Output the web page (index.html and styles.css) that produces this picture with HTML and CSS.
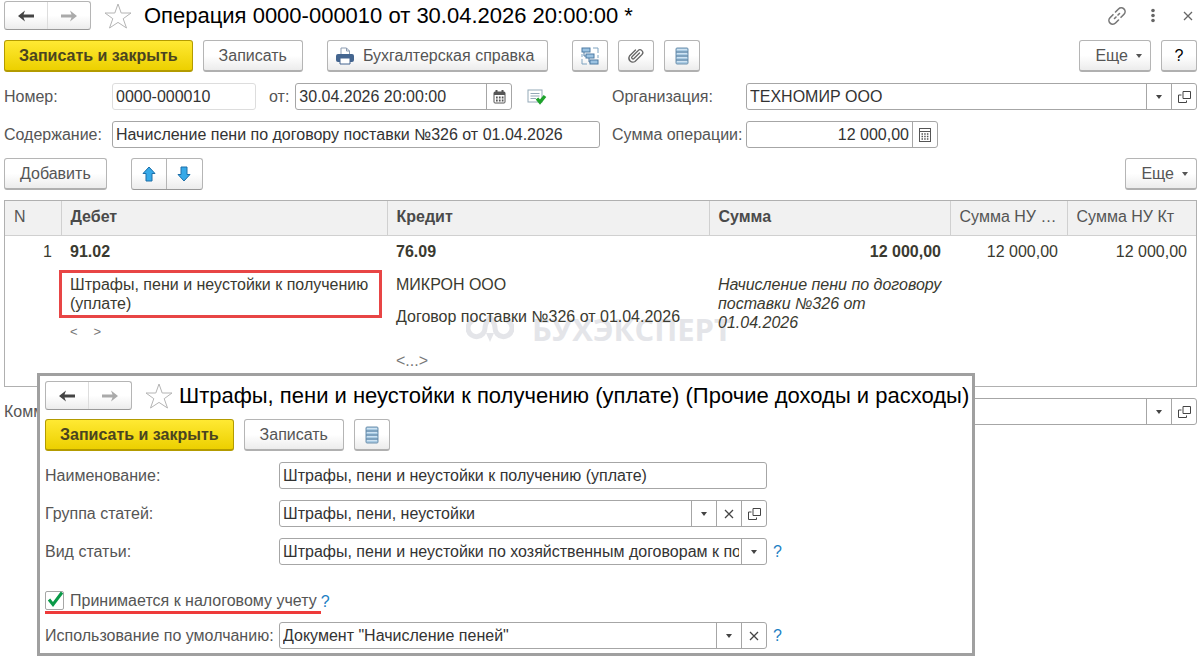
FILE: index.html
```html
<!DOCTYPE html>
<html lang="ru">
<head>
    <meta charset="UTF-8">
    <meta name="viewport" content="width=device-width, initial-scale=1.0">
    <title>Операция 0000-000010</title>
    <link rel="stylesheet" href="styles.css">
</head>
<body>
    <!-- Общие иконки -->
    <svg class="sprite" aria-hidden="true">
        <symbol id="i-back" viewBox="0 0 18 14">
            <path d="M1 7 L8 1.5 L6.5 5.5 H17 V8.5 H6.5 L8 12.5 Z" fill="currentColor"/>
        </symbol>
        <symbol id="i-forward" viewBox="0 0 18 14">
            <path d="M17 7 L10 1.5 L11.5 5.5 H1 V8.5 H11.5 L10 12.5 Z" fill="currentColor"/>
        </symbol>
        <symbol id="i-star" viewBox="0 0 28 26">
            <path d="M14 1 L17.2 10 H27 L19.2 15.7 L22.5 25 L14 19.4 L5.5 25 L8.8 15.7 L1 10 H10.8 Z" fill="#fff" stroke="#b4b4b4"/>
        </symbol>
        <symbol id="i-list" viewBox="0 0 14 18">
            <rect x="1" y="1" width="12" height="16" rx="1" fill="#a9cbe4" stroke="#6f91ad"/>
            <path d="M1 5 H13 M1 9 H13 M1 13 H13" stroke="#557a9b"/>
            <path d="M2 2.5 H12 M2 6.5 H12 M2 10.5 H12 M2 14.5 H12" stroke="#cfe3f2"/>
        </symbol>
        <symbol id="i-down" viewBox="0 0 6 4">
            <path d="M0 0 H6 L3 4 Z" fill="currentColor"/>
        </symbol>
        <symbol id="i-open" viewBox="0 0 13 13">
            <path d="M5 1.5 H12.5 V8.5 H5 Z M3.5 5 H0.5 V12.5 H8.5 V10.5" fill="none" stroke="currentColor"/>
        </symbol>
        <symbol id="i-cross" viewBox="0 0 10 10">
            <path d="M1 1 L9 9 M9 1 L1 9" fill="none" stroke="currentColor" stroke-width="1.3"/>
        </symbol>
    </svg>

    <main class="window">
        <header class="titlebar">
            <div class="nav">
                <button type="button" aria-label="Назад"><svg width="18" height="14"><use href="#i-back"/></svg></button>
                <button type="button" class="dim" aria-label="Вперед"><svg width="18" height="14"><use href="#i-forward"/></svg></button>
            </div>
            <button type="button" class="icon-btn" aria-label="В избранное"><svg width="28" height="26"><use href="#i-star"/></svg></button>
            <h1 class="title">Операция 0000-000010 от 30.04.2026 20:00:00 *</h1>
            <div class="window-tools">
                <button type="button" class="icon-btn" aria-label="Ссылка">
                    <svg width="20" height="20" viewBox="0 0 20 20" fill="none" stroke="#777" stroke-width="1.6" stroke-linecap="round">
                        <path d="M8.5 6 L11.5 3 A3.8 3.8 0 0 1 17 8.3 L14 11.3"/>
                        <path d="M11.5 14 L8.5 17 A3.8 3.8 0 0 1 3 11.7 L6 8.7"/>
                        <path d="M7.5 12.5 L9 11 M11 9 L12.5 7.5"/>
                    </svg>
                </button>
                <button type="button" class="icon-btn" aria-label="Меню">
                    <svg width="6" height="16" viewBox="0 0 6 16" fill="#666"><circle cx="3" cy="2.5" r="1.8"/><circle cx="3" cy="7.5" r="1.8"/><circle cx="3" cy="12.5" r="1.8"/></svg>
                </button>
                <button type="button" class="icon-btn icon-close" aria-label="Закрыть"><svg width="10" height="10"><use href="#i-cross"/></svg></button>
            </div>
        </header>

        <div class="toolbar">
            <button type="button" class="btn btn-main">Записать и закрыть</button>
            <button type="button" class="btn">Записать</button>
            <button type="button" class="btn btn-print">
                <svg width="18" height="18" viewBox="0 0 18 18">
                    <path d="M5 8 V1 H10.5 L13.5 4 V8" fill="#fff" stroke="#8b9bb0"/>
                    <path d="M10.5 1 V4 H13.5" fill="none" stroke="#8b9bb0"/>
                    <rect x="0" y="7" width="18" height="8" rx="2" fill="#44658f"/>
                    <path d="M4 11 H14 V17 H4 Z" fill="#fff" stroke="#44658f"/>
                </svg>
                Бухгалтерская справка
            </button>
            <div class="group">
                <button type="button" class="btn btn-icon" aria-label="Структура подчиненности">
                    <svg width="18" height="18" viewBox="0 0 18 18">
                        <path d="M12 1 H17 V6 M17 8 V11 M1 7 V10 M1 12 V17 H6" fill="none" stroke="#7fa3c0"/>
                        <path d="M3 5 V9 H5 M8 11 V15 H9" fill="none" stroke="#4d7ba3"/>
                        <g fill="#9cc3e2" stroke="#4d7ba3"><rect x="1" y="1" width="8" height="4"/><rect x="5" y="7" width="8" height="4"/><rect x="9" y="13" width="8" height="4"/></g>
                    </svg>
                </button>
                <button type="button" class="btn btn-icon" aria-label="Файлы">
                    <svg width="18" height="18" viewBox="0 0 18 18" fill="none" stroke="#666" stroke-width="1.3" stroke-linecap="round">
                        <path d="M12.5 6 L7 11.5 A1.3 1.3 0 0 1 5 9.7 L11 3.7 A2.7 2.7 0 0 1 15 7.5 L8 14.5 A4 4 0 0 1 2.5 9 L8.5 3"/>
                    </svg>
                </button>
                <button type="button" class="btn btn-icon" aria-label="Список"><svg width="14" height="18"><use href="#i-list"/></svg></button>
            </div>
            <div class="toolbar-end">
                <button type="button" class="btn btn-more">Еще <svg width="6" height="4"><use href="#i-down"/></svg></button>
                <button type="button" class="btn btn-icon btn-help">?</button>
            </div>
        </div>

        <form class="form">
            <label for="number">Номер:</label>
            <div class="line">
                <div class="field field-number"><input id="number" type="text" value="0000-000010"></div>
                <label for="date">от:</label>
                <div class="field field-date">
                    <input id="date" type="text" value="30.04.2026 20:00:00">
                    <button type="button" aria-label="Календарь">
                        <svg width="13" height="14" viewBox="0 0 13 14">
                            <rect x="1" y="2" width="11" height="11" rx="1" fill="#fff" stroke="#555"/>
                            <path d="M1 3.5 H12" stroke="#555" stroke-width="3"/>
                            <path d="M3.5 0 V3 M9.5 0 V3" stroke="#555" stroke-width="2"/>
                            <path d="M3 7.5 H10.5 M3 10.5 H10.5" stroke="#555" stroke-width="2" stroke-dasharray="1.7 1.2"/>
                        </svg>
                    </button>
                </div>
                <svg class="posted" width="20" height="16" viewBox="0 0 20 16">
                    <rect x="1" y="1" width="14" height="12" fill="#fff" stroke="#94a9b8"/>
                    <path d="M3.5 4.5 H12.5 M3.5 7 H12.5 M3.5 9.5 H9" stroke="#94a9b8"/>
                    <path d="M10 9.5 L13 13 L18 7" fill="none" stroke="#1ea32b" stroke-width="3.4"/>
                </svg>
            </div>
            <label for="org" class="second">Организация:</label>
            <div class="field">
                <div class="drop">
                    <select id="org"><option>ТЕХНОМИР ООО</option></select>
                    <span class="arrow"><svg width="6" height="4"><use href="#i-down"/></svg></span>
                </div>
                <button type="button" aria-label="Открыть"><svg width="13" height="13"><use href="#i-open"/></svg></button>
            </div>

            <label for="content">Содержание:</label>
            <div class="field"><input id="content" type="text" value="Начисление пени по договору поставки №326 от 01.04.2026"></div>
            <label for="sum" class="second">Сумма операции:</label>
            <div class="field field-sum">
                <input id="sum" type="text" value="12 000,00">
                <button type="button" aria-label="Калькулятор">
                    <svg width="12" height="14" viewBox="0 0 12 14">
                        <rect x=".5" y=".5" width="11" height="13" fill="#fff" stroke="#555"/>
                        <path d="M1 3.5 H11" stroke="#555"/>
                        <path d="M2.5 6 H10 M2.5 8.5 H10 M2.5 11 H10" stroke="#555" stroke-width="1.5" stroke-dasharray="1.5 1.2"/>
                    </svg>
                </button>
            </div>
        </form>

        <div class="toolbar">
            <button type="button" class="btn">Добавить</button>
            <div class="move">
                <button type="button" aria-label="Вверх"><svg width="14" height="16" viewBox="0 0 14 16"><path d="M7 1 L13 7.5 H10 V15 H4 V7.5 H1 Z" fill="#36a9e8" stroke="#1c6ea8"/></svg></button>
                <button type="button" aria-label="Вниз"><svg width="14" height="16" viewBox="0 0 14 16"><path d="M7 15 L13 8.5 H10 V1 H4 V8.5 H1 Z" fill="#36a9e8" stroke="#1c6ea8"/></svg></button>
            </div>
            <div class="toolbar-end">
                <button type="button" class="btn btn-more">Еще <svg width="6" height="4"><use href="#i-down"/></svg></button>
            </div>
        </div>

        <div class="grid-box">
            <div class="watermark" aria-hidden="true">
                <svg width="48" height="28" viewBox="0 0 48 28" fill="none" stroke="currentColor" stroke-width="5">
                    <path d="M8 5 A8.5 8.5 0 1 0 19 13 C19 8 22 5 24 2 C26 5 29 8 29 13 A8.5 8.5 0 1 0 40 5"/>
                    <path d="M20 18 H28 L24 27 Z" fill="currentColor" stroke="none"/>
                </svg>
                БУХЭКСПЕРТ
            </div>
            <table class="entries">
                <colgroup><col class="c-n"><col class="c-debit"><col class="c-credit"><col class="c-sum"><col class="c-nu"><col class="c-nu-kt"></colgroup>
                <thead>
                    <tr>
                        <th class="light">N</th>
                        <th>Дебет</th>
                        <th>Кредит</th>
                        <th>Сумма</th>
                        <th class="light">Сумма НУ Дт</th>
                        <th class="light">Сумма НУ Кт</th>
                    </tr>
                </thead>
                <tbody>
                    <tr>
                        <td class="num">1</td>
                        <td>
                            <div class="account">91.02</div>
                            <div class="marked">Штрафы, пени и неустойки к получению (уплате)</div>
                            <div class="empty-short"><span>&lt;</span><span>&gt;</span></div>
                        </td>
                        <td>
                            <div class="account">76.09</div>
                            <div class="analytic">МИКРОН ООО</div>
                            <div class="analytic">Договор поставки №326 от 01.04.2026</div>
                            <div class="empty">&lt;...&gt;</div>
                        </td>
                        <td>
                            <div class="account num">12 000,00</div>
                            <div class="note">Начисление пени по договору поставки №326 от 01.04.2026</div>
                        </td>
                        <td class="num">12 000,00</td>
                        <td class="num">12 000,00</td>
                    </tr>
                </tbody>
            </table>
        </div>

        <div class="comment">
            <label for="comment">Комментарий:</label>
            <div class="field">
                <input id="comment" type="text">
                <button type="button" aria-label="Выбрать"><svg width="6" height="4"><use href="#i-down"/></svg></button>
                <button type="button" aria-label="Открыть"><svg width="13" height="13"><use href="#i-open"/></svg></button>
            </div>
        </div>

        <section class="dialog" role="dialog" aria-labelledby="dialog-title">
            <header class="titlebar">
                <div class="nav">
                    <button type="button" aria-label="Назад"><svg width="18" height="14"><use href="#i-back"/></svg></button>
                    <button type="button" class="dim" aria-label="Вперед"><svg width="18" height="14"><use href="#i-forward"/></svg></button>
                </div>
                <button type="button" class="icon-btn" aria-label="В избранное"><svg width="28" height="26"><use href="#i-star"/></svg></button>
                <h2 class="title" id="dialog-title">Штрафы, пени и неустойки к получению (уплате) (Прочие доходы и расходы)</h2>
            </header>
            <div class="toolbar">
                <button type="button" class="btn btn-main">Записать и закрыть</button>
                <button type="button" class="btn">Записать</button>
                <button type="button" class="btn btn-icon" aria-label="Список"><svg width="14" height="18"><use href="#i-list"/></svg></button>
            </div>
            <form class="dialog-form">
                <label for="name">Наименование:</label>
                <div class="field"><input id="name" type="text" value="Штрафы, пени и неустойки к получению (уплате)"></div>
                <span></span>

                <label for="group">Группа статей:</label>
                <div class="field">
                    <div class="drop">
                        <select id="group"><option>Штрафы, пени, неустойки</option></select>
                        <span class="arrow"><svg width="6" height="4"><use href="#i-down"/></svg></span>
                    </div>
                    <button type="button" aria-label="Очистить"><svg width="10" height="10"><use href="#i-cross"/></svg></button>
                    <button type="button" aria-label="Открыть"><svg width="13" height="13"><use href="#i-open"/></svg></button>
                </div>
                <span></span>

                <label for="kind">Вид статьи:</label>
                <div class="field">
                    <div class="drop">
                        <select id="kind"><option>Штрафы, пени и неустойки по хозяйственным договорам к получению (уплате)</option></select>
                        <span class="arrow"><svg width="6" height="4"><use href="#i-down"/></svg></span>
                    </div>
                </div>
                <a href="#" class="help">?</a>

                <div class="check-row">
                    <label class="check">
                        <span class="box">
                            <input type="checkbox" checked>
                            <svg width="19" height="19" viewBox="0 0 19 19"><path d="M4 8.5 L8 13.5 L17 1.5" fill="none" stroke="#0a9a48" stroke-width="3"/></svg>
                        </span>
                        Принимается к налоговому учету
                    </label>
                    <a href="#" class="help">?</a>
                </div>

                <label for="usage">Использование по умолчанию:</label>
                <div class="field">
                    <div class="drop">
                        <select id="usage"><option>Документ "Начисление пеней"</option></select>
                        <span class="arrow"><svg width="6" height="4"><use href="#i-down"/></svg></span>
                    </div>
                    <button type="button" aria-label="Очистить"><svg width="10" height="10"><use href="#i-cross"/></svg></button>
                </div>
                <a href="#" class="help">?</a>
            </form>
        </section>
    </main>
</body>
</html>
```
FILE: styles.css
```css
* {
    box-sizing: border-box;
}
body {
    margin: 0;
    background: #fff;
    color: #404040;
    font: 16px/19px "Liberation Sans", Arial, sans-serif;
}
button, input, select {
    font: inherit;
    color: inherit;
}
svg {
    display: block;
    flex: none;
}
.sprite {
    position: absolute;
    width: 0;
    height: 0;
}
.window {
    position: relative;
    min-height: 100vh;
    padding: 1px 3px 0 4px;
}

/* Заголовок */
.titlebar {
    display: flex;
    align-items: center;
    height: 29px;
    margin-bottom: 10px;
}
.nav, .move {
    display: flex;
    flex: none;
    border: 1px solid #b5b5b5;
    border-bottom-color: #999;
    border-radius: 3px;
    background: linear-gradient(#fff 50%, #ececec);
}
.nav {
    width: 87px;
    height: 29px;
    margin-right: 13px;
}
.nav button, .move button {
    flex: 1;
    display: flex;
    align-items: center;
    justify-content: center;
    padding: 0;
    border: 0;
    background: none;
    color: #444;
}
.nav button + button {
    border-left: 1px solid #ddd;
}
.nav .dim {
    color: #aaa;
}
.icon-btn {
    padding: 0;
    border: 0;
    background: none;
    color: #666;
}
.icon-close {
    display: grid;
    place-items: center;
    width: 18px;
}
.title {
    margin: 0 0 0 12px;
    font-size: 22px;
    line-height: 28px;
    font-weight: normal;
    color: #000;
    white-space: nowrap;
}
.window-tools {
    display: flex;
    align-items: center;
    gap: 23px;
    margin-left: auto;
}

/* Кнопки */
.toolbar {
    display: flex;
    gap: 10px;
    margin-bottom: 11px;
}
.btn {
    display: flex;
    align-items: center;
    justify-content: center;
    height: 32px;
    padding: 0 15px;
    border: 1px solid #b5b5b5;
    border-bottom: 2px solid #b0b0b0;
    border-radius: 3px;
    background: linear-gradient(#fff 50%, #ececec);
    color: #555;
    white-space: nowrap;
}
.btn-main {
    padding: 0 14px;
    border-color: #b39b00;
    background: linear-gradient(#ffe933, #ecd000);
    color: #4a4420;
    font-weight: bold;
}
.btn-print {
    gap: 9px;
    margin-left: 14px;
    padding: 0 13px 0 8px;
}
.btn-icon {
    width: 36px;
    padding: 0;
}
.btn-more {
    gap: 8px;
    padding: 0 8px 0 15px;
}
.btn-help {
    color: #000;
}
.group {
    display: flex;
    gap: 10px;
    margin-left: 14px;
}
.toolbar-end {
    display: flex;
    gap: 10px;
    margin-left: auto;
}
.move {
    width: 72px;
    margin-left: 14px;
}
.move button + button {
    border-left: 1px solid #b5b5b5;
}

/* Поля */
.form {
    display: grid;
    grid-template-columns: 108px minmax(0, 488px) 146px minmax(0, 1fr);
    row-gap: 11px;
    align-items: center;
    margin-bottom: 10px;
    color: #555;
}
.second {
    padding-left: 12px;
}
.line {
    display: flex;
    align-items: center;
}
.line label {
    margin: 0 6px 0 13px;
}
.field {
    display: flex;
    height: 27px;
    min-width: 0;
    border: 1px solid #a6a6a6;
    border-radius: 3px;
    background: #fff;
    color: #333;
    overflow: hidden;
}
.field input, .field select {
    flex: 1;
    width: 100%;
    min-width: 0;
    padding: 0 3px;
    border: 0;
    outline: 0;
    background: none;
}
.field > button, .arrow {
    display: flex;
    align-items: center;
    justify-content: center;
    width: 25px;
    padding: 0;
    border: 0;
    border-left: 1px solid #a6a6a6;
    background: none;
    color: #444;
}
.field-number {
    width: 144px;
    border-color: #ddd;
}
.field-date {
    width: 217px;
}
.field-sum {
    width: 192px;
}
.field-sum input {
    text-align: right;
}
.posted {
    margin-left: 15px;
}
.drop {
    flex: 1;
    min-width: 0;
    display: grid;
    grid-template-columns: minmax(0, 1fr) 25px;
}
.drop select {
    grid-area: 1 / 1 / 2 / 3;
    padding-right: 27px;
    appearance: none;
}
.drop .arrow {
    grid-area: 1 / 2 / 2 / 3;
    pointer-events: none;
}

/* Таблица проводок */
.grid-box {
    position: relative;
    height: 187px;
    margin-top: -1px;
    border: 1px solid #b0b0b0;
}
.entries {
    position: relative;
    width: 100%;
    table-layout: fixed;
    border-collapse: collapse;
    color: #3a3a30;
}
.c-n { width: 56px; }
.c-debit { width: 326px; }
.c-credit { width: 322px; }
.c-nu { width: 117px; }
.c-nu-kt { width: 129px; }
.entries th {
    height: 34px;
    padding: 0 9px 2px;
    border-bottom: 1px solid #d0d0d0;
    background: #f1f1f1;
    color: #4a4a4a;
    text-align: left;
    white-space: nowrap;
    overflow: hidden;
    text-overflow: ellipsis;
}
.entries th + th {
    border-left: 1px solid #d0d0d0;
}
.entries .light {
    font-weight: normal;
    color: #555;
}
.entries td {
    padding: 6px 9px 0;
    vertical-align: top;
}
.entries .num {
    text-align: right;
}
.account {
    margin-bottom: 14px;
    font-weight: bold;
}
.marked {
    margin: -5px -4px 8px -11px;
    padding: 2px 8px;
    border: 3px solid #e84545;
}
.analytic {
    margin-bottom: 13px;
}
.note {
    margin-right: -8px;
    font-style: italic;
}
.empty {
    margin-top: 25px;
    color: #777;
}
.empty-short {
    display: flex;
    gap: 16px;
    color: #777;
    font-size: 13px;
    line-height: 12px;
}
.watermark {
    position: absolute;
    left: 461px;
    top: 109px;
    display: flex;
    align-items: center;
    gap: 18px;
    color: #e4e5e9;
    font: bold 31px/38px "Open Sans", sans-serif;
}

.comment {
    display: grid;
    grid-template-columns: 108px minmax(0, 1fr);
    align-items: center;
    margin-top: 11px;
    color: #555;
}

/* Карточка статьи поверх операции */
.dialog {
    position: absolute;
    left: 37px;
    top: 373px;
    width: 938px;
    padding: 5px 5px 4px;
    border: 3px solid #a0a0a0;
    background: #fff;
}
.dialog .titlebar {
    margin-bottom: 9px;
}
.dialog .title {
    margin-left: 6px;
}
.dialog-form {
    display: grid;
    grid-template-columns: 234px 488px auto;
    row-gap: 11px;
    align-items: center;
    color: #555;
}
.help {
    margin-left: 6px;
    color: #1d7fc4;
    text-decoration: none;
}
.check-row {
    grid-column: 1 / -1;
    display: flex;
    align-items: center;
    margin: 13px 0 -3px;
}
.check-row .help {
    margin-left: 0;
}
.check {
    display: flex;
    align-items: center;
    gap: 6px;
    padding: 2px 4px 1px 0;
    border-bottom: 3px solid #ee3a3a;
}
.box {
    display: grid;
}
.box input, .box svg {
    grid-area: 1 / 1;
}
.box svg {
    pointer-events: none;
}
.box input {
    appearance: none;
    width: 19px;
    height: 19px;
    margin: 0;
    border: 1px solid #a6a6a6;
    border-radius: 2px;
}
.box input:not(:checked) + svg {
    visibility: hidden;
}
```
